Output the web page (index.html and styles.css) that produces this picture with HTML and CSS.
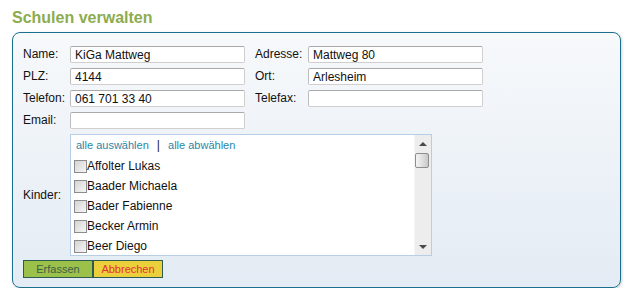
FILE: index.html
```html
<!DOCTYPE html>
<html lang="de">
<head>
    <meta charset="UTF-8">
    <meta name="viewport" content="width=device-width, initial-scale=1.0">
    <title>Schulen verwalten</title>
    <link rel="stylesheet" href="styles.css">
</head>
<body>
    <h2 class="page-title">Schulen verwalten</h2>

    <div class="panel">
        <form class="school-form">
            <div class="form-grid">
                <label class="field-label" for="name">Name:</label>
                <input class="field-input" type="text" id="name" value="KiGa Mattweg">
                <span></span>
                <label class="field-label" for="adresse">Adresse:</label>
                <input class="field-input" type="text" id="adresse" value="Mattweg 80">

                <label class="field-label" for="plz">PLZ:</label>
                <input class="field-input" type="text" id="plz" value="4144">
                <span></span>
                <label class="field-label" for="ort">Ort:</label>
                <input class="field-input" type="text" id="ort" value="Arlesheim">

                <label class="field-label" for="telefon">Telefon:</label>
                <input class="field-input" type="text" id="telefon" value="061 701 33 40">
                <span></span>
                <label class="field-label" for="telefax">Telefax:</label>
                <input class="field-input" type="text" id="telefax" value="">

                <label class="field-label" for="email">Email:</label>
                <input class="field-input" type="text" id="email" value="">
                <span class="filler"></span>

                <span class="field-label kinder-label">Kinder:</span>
                <div class="kinder-box">
                    <div class="kinder-list">
                        <div class="select-links">
                            <a href="#">alle auswählen</a>
                            <span class="sep">|</span>
                            <a href="#">alle abwählen</a>
                        </div>
                        <label class="kind-item"><input type="checkbox">Affolter Lukas</label>
                        <label class="kind-item"><input type="checkbox">Baader Michaela</label>
                        <label class="kind-item"><input type="checkbox">Bader Fabienne</label>
                        <label class="kind-item"><input type="checkbox">Becker Armin</label>
                        <label class="kind-item"><input type="checkbox">Beer Diego</label>
                    </div>
                    <div class="fake-scrollbar">
                        <div class="scroll-btn"><span class="arrow-up"></span></div>
                        <div class="scroll-track">
                            <div class="scroll-thumb"></div>
                        </div>
                        <div class="scroll-btn"><span class="arrow-down"></span></div>
                    </div>
                </div>
            </div>

            <div class="form-buttons">
                <button type="button" class="btn btn-save">Erfassen</button>
                <button type="button" class="btn btn-cancel">Abbrechen</button>
            </div>
        </form>
    </div>
</body>
</html>
```

FILE: styles.css
```css
body {
    margin: 0;
    padding: 9px 12px 0 12px;
    font-family: "Liberation Sans", Arial, sans-serif;
    font-size: 12px;
    color: #111;
    background: #fff;
}

.page-title {
    margin: 0 0 5px 0;
    font-size: 16px;
    line-height: 18px;
    font-weight: bold;
    color: #8dac4f;
}

.panel {
    width: 587px;
    padding: 13px 10px 9px 10px;
    border: 1px solid #1b7090;
    border-radius: 8px;
    background: linear-gradient(to bottom, #f7f9fb 0%, #e3ebf4 100%);
    box-shadow: 1px 1px 3px rgba(0, 0, 0, 0.18);
}

.form-grid {
    display: grid;
    grid-template-columns: 47px 175px 10px 53px 175px;
    row-gap: 5px;
    align-items: center;
}

.field-label {
    font-size: 12px;
    line-height: 17px;
    color: #111;
}

.field-input {
    box-sizing: border-box;
    width: 175px;
    height: 17px;
    margin: 0;
    padding: 0 4px;
    border: 1px solid #cfcfcf;
    border-top-color: #a9a9a9;
    border-left-color: #bdbdbd;
    border-radius: 2px;
    background: #fff;
    font-family: "Liberation Sans", Arial, sans-serif;
    font-size: 12px;
    color: #111;
    outline: none;
}

.filler {
    grid-column: 3 / 6;
}

.kinder-label {
    align-self: center;
}

.kinder-box {
    grid-column: 2 / 6;
    box-sizing: border-box;
    width: 362px;
    height: 122px;
    border: 1px solid #b6cfe6;
    background: #fff;
    display: flex;
}

.kinder-list {
    flex: 1;
    overflow: hidden;
    padding-left: 3px;
}

.select-links {
    height: 20px;
    line-height: 21px;
    padding-left: 2px;
    font-size: 11px;
}

.select-links a {
    color: #2a86a8;
    text-decoration: none;
}

.select-links .sep {
    margin: 0 5px;
    font-size: 12px;
    color: #222;
}

.kind-item {
    display: flex;
    align-items: center;
    height: 20px;
    padding-top: 2px;
    box-sizing: border-box;
    font-size: 12px;
    line-height: 14px;
    color: #111;
}

.kind-item input {
    appearance: none;
    -webkit-appearance: none;
    width: 13px;
    height: 13px;
    margin: 0;
    border: 1px solid #8c8c8c;
    background: linear-gradient(135deg, #d4d4d4 0%, #f6f6f6 100%);
}

.fake-scrollbar {
    width: 16px;
    display: flex;
    flex-direction: column;
    background: #ededed;
    border-left: 1px solid #f6f6f6;
}

.scroll-btn {
    height: 17px;
    display: flex;
    align-items: center;
    justify-content: center;
}

.arrow-up,
.arrow-down {
    width: 0;
    height: 0;
    border-left: 4px solid transparent;
    border-right: 4px solid transparent;
}

.arrow-up {
    border-bottom: 4px solid #4a4a4a;
}

.arrow-down {
    border-top: 4px solid #4a4a4a;
}

.scroll-track {
    flex: 1;
    padding-top: 1px;
}

.scroll-thumb {
    box-sizing: border-box;
    width: 14px;
    height: 15px;
    border: 1px solid #8d8d8d;
    border-radius: 2px;
    background: linear-gradient(to right, #f4f4f4 0%, #dcdcdc 60%, #c8c8c8 100%);
}

.form-buttons {
    display: flex;
    margin-top: 4px;
}

.btn {
    box-sizing: border-box;
    width: 70px;
    height: 18px;
    padding: 0;
    border: 1px solid #2f5c52;
    font-family: "Liberation Sans", Arial, sans-serif;
    font-size: 11px;
    line-height: 16px;
    cursor: pointer;
}

.btn-save {
    background: #9cc14b;
    color: #3d5d44;
}

.btn-cancel {
    background: #ebd03b;
    color: #e3313a;
}
```
